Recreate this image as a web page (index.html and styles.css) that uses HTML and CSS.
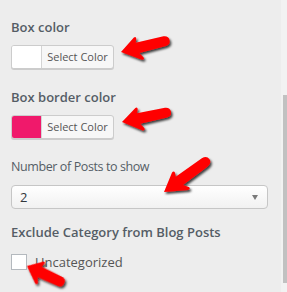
FILE: index.html
```html
<!DOCTYPE html>
<html lang="en">
<head>
  <meta charset="UTF-8" />
  <meta name="viewport" content="width=device-width, initial-scale=1.0"/>
  <title>Widget Settings</title>
  <link rel="stylesheet" href="styles.css">
</head>
<body>
  <div class="panel">
    <div class="settings">
      <div class="field">
        <label class="field-label">Box color</label>
        <button class="color-btn" type="button">
          <span class="swatch swatch-white"></span>
          <span class="color-text">Select Color</span>
        </button>
      </div>

      <div class="field">
        <label class="field-label">Box border color</label>
        <button class="color-btn" type="button">
          <span class="swatch swatch-pink"></span>
          <span class="color-text">Select Color</span>
        </button>
      </div>

      <div class="field field-select">
        <label class="field-label light">Number of Posts to show</label>
        <div class="select-box">
          <span class="select-value">2</span>
          <span class="select-arrow"></span>
        </div>
      </div>

      <div class="field">
        <label class="field-label">Exclude Category from Blog Posts</label>
        <div class="check-row">
          <span class="check-box"></span>
          <span class="check-text">Uncategorized</span>
        </div>
      </div>
    </div>

    <!-- fake scrollbar on the right -->
    <div class="scroll-track">
      <div class="scroll-thumb"></div>
    </div>
  </div>

  <!-- red annotation arrows drawn over the form -->
  <svg class="arrows" width="287" height="292" viewBox="0 0 287 292">
    <defs>
      <filter id="shadow" x="-30%" y="-30%" width="160%" height="160%">
        <feDropShadow dx="1.5" dy="2" stdDeviation="1.2" flood-color="#000" flood-opacity="0.75"/>
      </filter>
      <path id="arrow" d="M0 0 L16 -11 Q18.5 -12 18 -9 L16.5 -5.5 L45 -5 Q50 -4.5 50 0 Q50 4.5 45 5 L17.5 5.5 L20.5 10.5 Q21.5 13 18.5 12.5 Z"/>
    </defs>
    <g fill="#ff0000" filter="url(#shadow)">
      <use href="#arrow" transform="translate(121 52) rotate(-14)"/>
      <use href="#arrow" transform="translate(122 122) rotate(-12)"/>
      <use href="#arrow" transform="translate(164 192) rotate(-36) scale(1.12 1)"/>
      <use href="#arrow" transform="translate(27 266) rotate(25) scale(0.82 1)"/>
    </g>
  </svg>
</body>
</html>
```

FILE: styles.css
```css
* {
  box-sizing: border-box;
  margin: 0;
  padding: 0;
}

body {
  background: #ededed;
  font-family: 'Open Sans', 'Noto Sans', sans-serif;
  color: #555d66;
  width: 287px;
  height: 292px;
  overflow: hidden;
  position: relative;
}

.panel {
  display: flex;
  height: 292px;
}

.settings {
  flex: 1;
  padding: 17px 0 0 11px;
}

.field {
  margin-bottom: 18px;
}

.field-select {
  margin-bottom: 13px;
}

.field-label {
  display: block;
  font-size: 13px;
  line-height: 20px;
  font-weight: 600;
  margin-bottom: 8px;
}

.field-label.light {
  font-weight: 400;
  font-size: 12.5px;
  letter-spacing: -0.4px;
}

.color-btn {
  display: flex;
  align-items: stretch;
  height: 24px;
  width: 103px;
  border: 1px solid #cccccc;
  border-radius: 3px;
  background: #f7f7f7;
  overflow: hidden;
  box-shadow: 0 1px 0 #cccccc;
  font-family: inherit;
}

.swatch {
  width: 30px;
  border-right: 1px solid #d4d4d4;
}

.swatch-white {
  background: #ffffff;
}

.swatch-pink {
  background: #f0196b;
}

.color-text {
  flex: 1;
  font-size: 11px;
  line-height: 22px;
  color: #555555;
  text-align: center;
}

.select-box {
  display: flex;
  align-items: center;
  justify-content: space-between;
  width: 257px;
  height: 24px;
  padding: 0 8px;
  border: 1px solid #c6c6c6;
  border-radius: 4px;
  background: linear-gradient(#ffffff, #f1f1f1);
}

.select-value {
  font-size: 13px;
  color: #32373c;
}

.select-arrow {
  width: 0;
  height: 0;
  border-left: 3.5px solid transparent;
  border-right: 3.5px solid transparent;
  border-top: 5px solid #7a7a7a;
  margin-right: 1px;
}

.check-row {
  display: flex;
  align-items: center;
  gap: 8px;
  margin-top: 11px;
}

.check-box {
  width: 16px;
  height: 16px;
  background: #ffffff;
  border: 1px solid #b4b9be;
}

.check-text {
  font-size: 13px;
  color: #555555;
}

.scroll-track {
  width: 6px;
  background: #f2f2f2;
}

.scroll-thumb {
  width: 4px;
  height: 188px;
  margin: 95px 0 0 2px;
  background: #c1c1c1;
}

/* annotation layer */
.arrows {
  position: absolute;
  top: 0;
  left: 0;
  pointer-events: none;
}
```
